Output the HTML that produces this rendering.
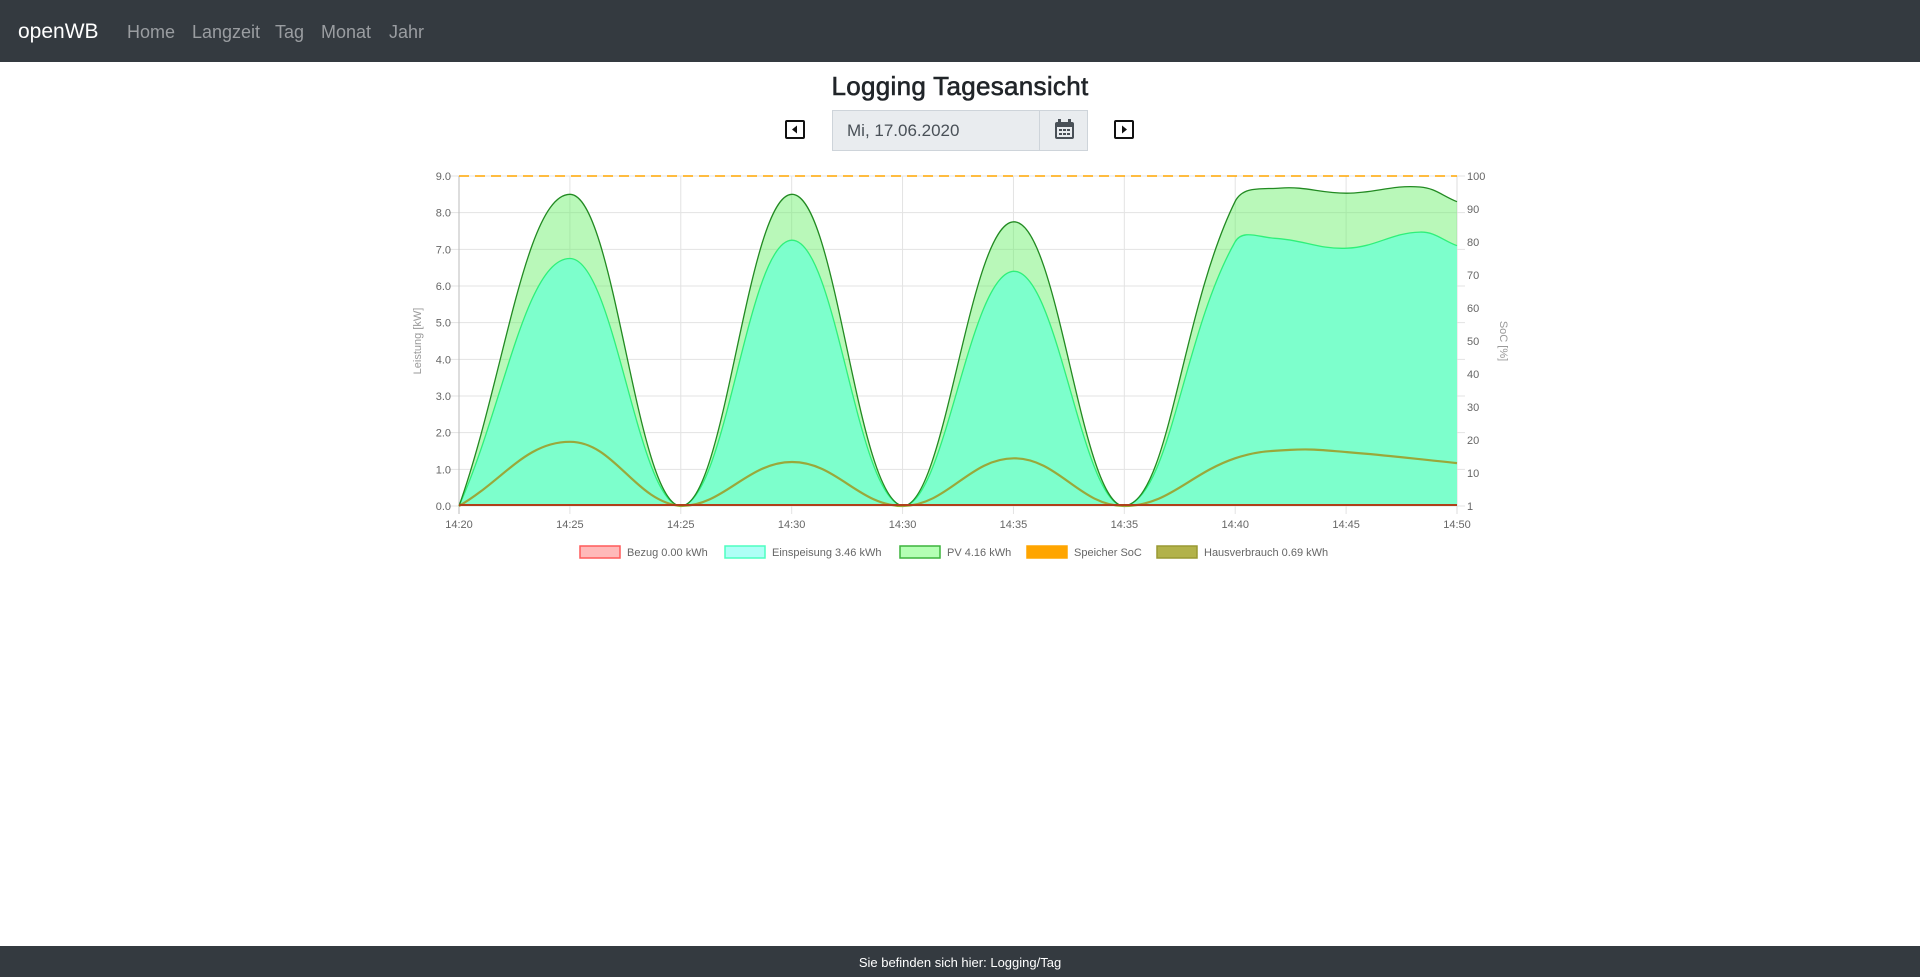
<!DOCTYPE html>
<html><head><meta charset="utf-8"><style>
*{box-sizing:border-box;margin:0;padding:0}
body{width:1920px;height:977px;overflow:hidden;background:#fff;font-family:"Liberation Sans",sans-serif;position:relative}
.nav{position:absolute;left:0;top:0;width:1920px;height:62px;background:#343a40}
.brand{position:absolute;left:18px;top:20px;color:#fff;font-size:21px}
.nav a{position:absolute;top:22px;color:#9a9da1;font-size:18px;text-decoration:none}
h1{position:absolute;left:0;width:1920px;top:71px;text-align:center;font-size:26px;font-weight:normal;color:#212529;-webkit-text-stroke:.6px #212529;letter-spacing:.3px}
.date{position:absolute;left:832px;top:110px;width:256px;height:41px;background:#e9ecef;border:1px solid #ced4da}
.date span{position:absolute;left:14px;top:10px;font-size:17px;color:#495057}
.date .cal{position:absolute;left:206px;top:-1px;width:49px;height:41px;border-left:1px solid #ced4da}
.btn{position:absolute;top:120px;width:20px;height:19px;border:2px solid #111;border-radius:2px}
.footer{position:absolute;left:0;top:946px;width:1920px;height:31px;background:#343a40;color:#fff;font-size:13px;text-align:center;line-height:34px}
svg text{font-family:"Liberation Sans",sans-serif;fill:#666;font-size:11px}
</style></head><body>
<div class="nav"><div class="brand">openWB</div>
<a style="left:127px">Home</a><a style="left:192px">Langzeit</a><a style="left:275px">Tag</a><a style="left:321px">Monat</a><a style="left:389px">Jahr</a></div>
<h1>Logging Tagesansicht</h1>
<div class="btn" style="left:785px"><svg width="16" height="15" style="position:absolute;left:0;top:0"><path d="M10 3.5L5 7.5L10 11.5Z" fill="#111"/></svg></div>
<div class="date"><span>Mi, 17.06.2020</span><div class="cal"><svg width="49" height="41"><rect x="15" y="12" width="19" height="17" rx="2" fill="#495057"/><rect x="17" y="17" width="15" height="10" fill="#e9ecef"/><rect x="18" y="9" width="3" height="5" fill="#495057"/><rect x="28" y="9" width="3" height="5" fill="#495057"/><g fill="#495057"><rect x="19" y="19" width="3" height="2"/><rect x="23" y="19" width="3" height="2"/><rect x="27" y="19" width="3" height="2"/><rect x="19" y="23" width="3" height="2"/><rect x="23" y="23" width="3" height="2"/><rect x="27" y="23" width="3" height="2"/></g></svg></div></div>
<div class="btn" style="left:1114px"><svg width="16" height="15" style="position:absolute;left:0;top:0"><path d="M6 3.5L11 7.5L6 11.5Z" fill="#111"/></svg></div>
<svg id="ch" width="1920" height="600" style="position:absolute;left:0;top:0"></svg>
<div class="footer">Sie befinden sich hier: Logging/Tag</div>
<script>
var L=459,R=1457,T=176,B=506,U=(B-T)/9;
function Y(v){return B-v*U}
function path(pts){pts=pts.map(p=>[p[0],Y(p[1])]);var t=0.4,cps=[];
for(var i=0;i<pts.length;i++){var p=pts[i-1]||pts[i],c=pts[i],n=pts[i+1]||pts[i];
var d01=Math.hypot(c[0]-p[0],c[1]-p[1]),d12=Math.hypot(n[0]-c[0],n[1]-c[1]);var s=d01+d12||1;var fa=t*d01/s,fb=t*d12/s;
var pp=[c[0]-fa*(n[0]-p[0]),Math.min(B,Math.max(T,c[1]-fa*(n[1]-p[1])))],nn=[c[0]+fb*(n[0]-p[0]),Math.min(B,Math.max(T,c[1]+fb*(n[1]-p[1])))];cps.push([pp,nn]);}
var d="M"+pts[0][0]+" "+pts[0][1];for(var i=1;i<pts.length;i++){d+=" C"+cps[i-1][1][0].toFixed(1)+" "+cps[i-1][1][1].toFixed(1)+" "+cps[i][0][0].toFixed(1)+" "+cps[i][0][1].toFixed(1)+" "+pts[i][0]+" "+pts[i][1].toFixed(1);}return d}
var pv=[[459,0],[570,8.5],[681,0],[792,8.5],[903,0],[1014,7.75],[1124,0],[1235,8.3],[1280,8.67],[1347,8.53],[1420,8.7],[1457,8.3]];
var ei=[[459,0],[570,6.75],[681,0],[792,7.25],[903,0],[1014,6.4],[1124,0],[1235,7.2],[1275,7.3],[1347,7.03],[1420,7.47],[1457,7.1]];
var ha=[[459,0],[570,1.75],[681,0],[792,1.2],[903,0],[1014,1.3],[1124,0],[1235,1.3],[1290,1.53],[1347,1.47],[1457,1.17]];
var s='';
var soc=['1','10','20','30','40','50','60','70','80','90','100'];
for(var i=0;i<=9;i++){var y=Y(i);s+='<line x1="'+(L-10)+'" x2="'+(R+8)+'" y1="'+y+'" y2="'+y+'" stroke="#e3e3e3"/>';
s+='<text x="451" y="'+(y+4)+'" text-anchor="end">'+i+'.0</text>';}
for(var i=0;i<=10;i++){var y=B-i*(B-T)/10;s+='<text x="1467" y="'+(y+4)+'">'+soc[i]+'</text>';}
var lab=['14:20','14:25','14:25','14:30','14:30','14:35','14:35','14:40','14:45','14:50'];
for(var i=0;i<=9;i++){var x=L+i*(R-L)/9;s+='<line x1="'+x+'" x2="'+x+'" y1="'+T+'" y2="'+(B+8)+'" stroke="#e3e3e3"/>';
s+='<text x="'+x+'" y="'+(B+22)+'" text-anchor="middle">'+lab[i]+'</text>';}
s+='<line x1="'+L+'" x2="'+L+'" y1="'+T+'" y2="'+(B+8)+'" stroke="#bbb"/><line x1="'+R+'" x2="'+R+'" y1="'+T+'" y2="'+(B+8)+'" stroke="#ddd"/>';
var pd=path(pv),ed=path(ei),hd=path(ha);
s+='<path d="'+pd+' L1457 '+B+' L459 '+B+'Z" fill="rgba(100,240,100,0.45)"/>';
s+='<path d="'+ed+' L1457 '+B+' L459 '+B+'Z" fill="#7dffcc"/>';
s+='<path d="'+ed+'" fill="none" stroke="#2ff07a" stroke-width="1.3"/>';
s+='<path d="'+pd+'" fill="none" stroke="#228a22" stroke-width="1.3"/>';
s+='<path d="'+hd+'" fill="none" stroke="#9aa83a" stroke-width="2.2"/>';
s+='<line x1="459" x2="1457" y1="505" y2="505" stroke="#b0401a" stroke-width="2"/>';
s+='<line x1="459" x2="1457" y1="176" y2="176" stroke="#ffa500" stroke-width="1.5" stroke-dasharray="10,6"/>';
s+='<text transform="translate(421,341) rotate(-90)" text-anchor="middle" style="fill:#999;font-size:11px">Leistung [kW]</text>';
s+='<text transform="translate(1500,341) rotate(90)" text-anchor="middle" style="fill:#999;font-size:11px">SoC [%]</text>';
var lg=[[580,'rgba(255,99,99,0.45)','#ff5a5a','Bezug 0.00 kWh'],[725,'rgba(120,255,240,0.6)','#4dffc0','Einspeisung 3.46 kWh'],[900,'rgba(130,255,130,0.6)','#3cb43c','PV 4.16 kWh'],[1027,'#ffa500','#ffa500','Speicher SoC'],[1157,'#b2b24a','#999933','Hausverbrauch 0.69 kWh']];
lg.forEach(function(g){s+='<rect x="'+g[0]+'" y="546" width="40" height="12" fill="'+g[1]+'" stroke="'+g[2]+'" stroke-width="1.5"/><text x="'+(g[0]+47)+'" y="556">'+g[3]+'</text>';});
document.getElementById('ch').innerHTML=s;
</script>
</body></html>
